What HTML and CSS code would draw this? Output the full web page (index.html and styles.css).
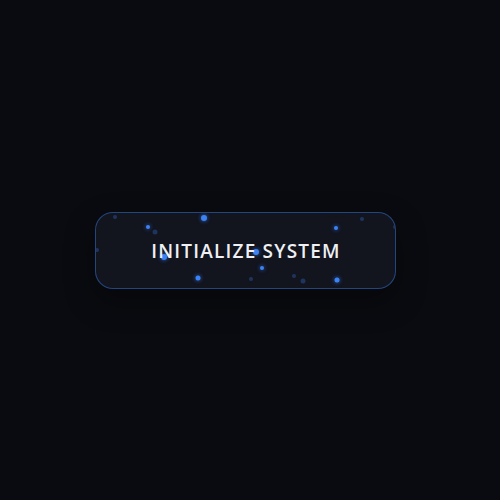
FILE: index.html
```html
<!DOCTYPE html>
<html>
<head>
<meta charset="utf-8">
<link rel="stylesheet" href="styles.css">
</head>
<body>
<main class="stage">
  <button class="btn">
    <span class="particles">
      <i class="p p-lg" style="left:108px;top:5px"></i>
      <i class="p p-sm" style="left:52px;top:14px"></i>
      <i class="p p-dim p-md" style="left:59px;top:19px"></i>
      <i class="p p-dim p-sm" style="left:19px;top:4px"></i>
      <i class="p p-dim p-sm" style="left:1px;top:37px"></i>
      <i class="p p-lg" style="left:68px;top:44px"></i>
      <i class="p p-md" style="left:102px;top:65px"></i>
      <i class="p p-lg" style="left:160px;top:39px"></i>
      <i class="p p-sm" style="left:166px;top:55px"></i>
      <i class="p p-sm" style="left:240px;top:15px"></i>
      <i class="p p-dim p-sm" style="left:266px;top:6px"></i>
      <i class="p p-md" style="left:241px;top:67px"></i>
      <i class="p p-dim p-md" style="left:207px;top:68px"></i>
      <i class="p p-dim p-sm" style="left:198px;top:63px"></i>
      <i class="p p-dim p-sm" style="left:155px;top:66px"></i>
      <i class="p p-dim p-sm" style="left:299px;top:14px"></i>
    </span>
    <span class="label">INITIALIZE SYSTEM</span>
  </button>
</main>
</body>
</html>
```

FILE: styles.css
```css
html, body {
  margin: 0;
  height: 100%;
  background: #0a0b10;
}

.stage {
  height: 100%;
  display: flex;
  align-items: center;
  justify-content: center;
  padding-right: 9px;
  padding-top: 1px;
  box-sizing: border-box;
}

.btn {
  position: relative;
  width: 301px;
  height: 77px;
  border-radius: 18px;
  border: 1px solid rgba(59, 130, 246, 0.45);
  background: #12141e;
  box-shadow: 0 12px 30px rgba(0, 0, 0, 0.35);
  display: flex;
  align-items: center;
  justify-content: center;
  overflow: hidden;
  padding: 0;
  cursor: pointer;
}

.label {
  position: relative;
  font-family: "Open Sans", "Noto Sans", sans-serif;
  font-weight: 600;
  font-size: 19px;
  letter-spacing: 1.2px;
  color: #eef0f4;
  padding-left: 1px;
}

.particles {
  position: absolute;
  inset: 0;
}

.p {
  position: absolute;
  display: block;
  border-radius: 50%;
  background: #3b82f6;
  box-shadow: 0 0 4px rgba(59, 130, 246, 0.8);
  transform: translate(-50%, -50%);
}

.p-lg { width: 6px; height: 6px; }
.p-md { width: 5px; height: 5px; }
.p-sm { width: 4px; height: 4px; }

.p-dim {
  opacity: 0.3;
  box-shadow: none;
}
```
